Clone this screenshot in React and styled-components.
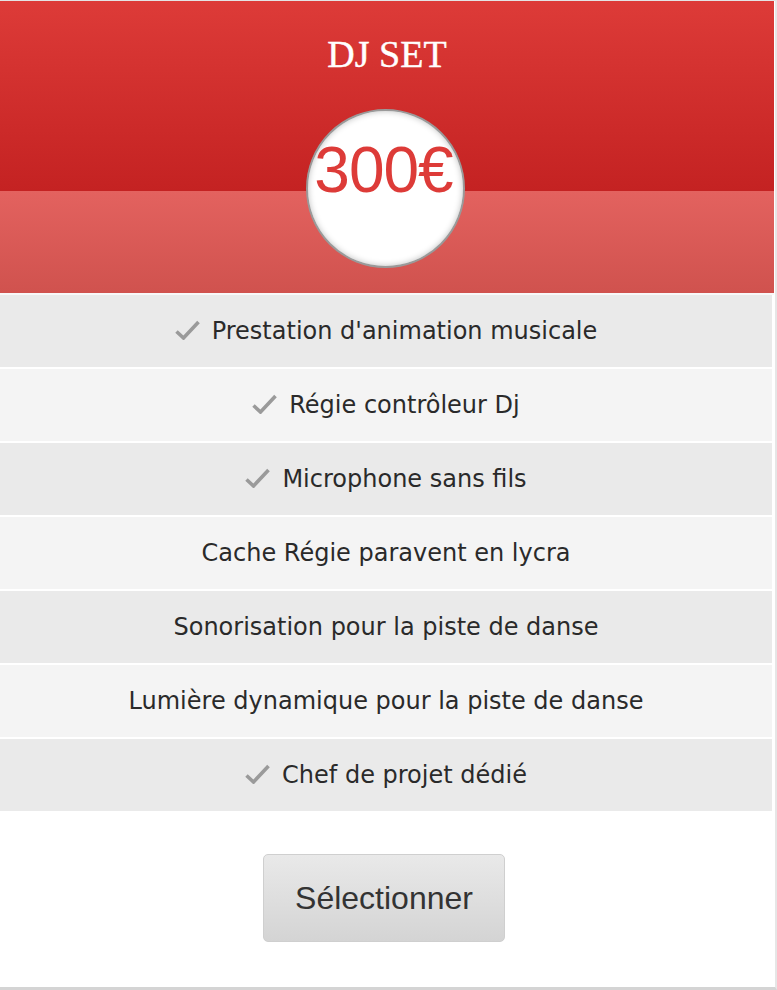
import React from "react";
import styled, { createGlobalStyle } from "styled-components";

const GlobalStyle = createGlobalStyle`
  html, body {
    margin: 0;
    padding: 0;
    background: #ffffff;
  }
`;

const features = [
  { label: "Prestation d'animation musicale", included: true },
  { label: "Régie contrôleur Dj", included: true },
  { label: "Microphone sans fils", included: true },
  { label: "Cache Régie paravent en lycra", included: false },
  { label: "Sonorisation pour la piste de danse", included: false },
  { label: "Lumière dynamique pour la piste de danse", included: false },
  { label: "Chef de projet dédié", included: true },
];

const CheckIcon = () => (
  <svg width="25" height="20" viewBox="0 0 25 20" aria-hidden="true">
    <path d="M1.5 11.5 L8.5 18 L23.5 2" fill="none" stroke="#9a9a9a" strokeWidth="3.6" strokeLinejoin="miter" />
  </svg>
);

export default function App() {
  return (
    <>
      <GlobalStyle />
      <Card>
        <Header>
          <Title>DJ SET</Title>
        </Header>
        <Band />
        <PriceBadge>
          <Price>300€</Price>
        </PriceBadge>
        <Features>
          {features.map((f, i) => (
            <Feature key={f.label} $alt={i % 2 === 1}>
              {f.included && <CheckIcon />}
              <span>{f.label}</span>
            </Feature>
          ))}
        </Features>
        <Footer>
          <SelectButton type="button">Sélectionner</SelectButton>
        </Footer>
      </Card>
    </>
  );
}

const Card = styled.div`
  position: relative;
  width: 775px;
  height: 986px;
  border-top: 1px solid #e4e4e4;
  border-right: 2px solid #e6e6e6;
  border-bottom: 3px solid #d4d4d4;
  background: #fff;
  display: flex;
  flex-direction: column;
`;

const Header = styled.div`
  height: 190px;
  margin-right: 1px;
  background: linear-gradient(to bottom, #dd3b38, #c42222);
  display: flex;
  justify-content: center;
`;

const Title = styled.h1`
  margin: 30px 0 0;
  font-family: "Liberation Serif", "Times New Roman", serif;
  font-weight: normal;
  font-size: 38px;
  line-height: 46px;
  color: #fff;
  -webkit-text-stroke: 0.4px #fff;
`;

const Band = styled.div`
  height: 102px;
  margin-right: 1px;
  background: linear-gradient(to bottom, #e3625f, #d0524e);
  border-bottom: 2px solid #f8f8f8;
`;

const PriceBadge = styled.div`
  position: absolute;
  left: 306px;
  top: 108px;
  width: 155px;
  height: 155px;
  border-radius: 50%;
  background: #fff;
  border: 2px solid #9a9a9a;
  box-shadow: inset 0 0 6px rgba(0, 0, 0, 0.25);
  display: flex;
  justify-content: center;
`;

const Price = styled.div`
  margin-top: 22px;
  margin-left: -4px;
  font-family: "Liberation Sans", Arial, sans-serif;
  font-size: 64px;
  line-height: 74px;
  color: #dd3b38;
  letter-spacing: -1px;
  white-space: nowrap;
`;

const Features = styled.ul`
  list-style: none;
  margin: 0 3px 0 0;
  padding: 0;
`;

const Feature = styled.li`
  height: 72px;
  border-bottom: 2px solid #fff;
  background: ${(p) => (p.$alt ? "#f4f4f4" : "#eaeaea")};
  display: flex;
  align-items: center;
  justify-content: center;
  gap: 12px;
  font-family: "DejaVu Sans", Verdana, sans-serif;
  font-size: 24px;
  color: #2a2a2a;

  svg {
    margin-top: -2px;
  }
`;

const Footer = styled.div`
  flex: 1;
  display: flex;
  justify-content: center;
  padding-top: 41px;
  padding-right: 7px;
`;

const SelectButton = styled.button`
  width: 242px;
  height: 88px;
  border: 1px solid #cfcfcf;
  border-radius: 5px;
  background: linear-gradient(to bottom, #e9e9e9, #d4d4d4);
  font-family: "Liberation Sans", Arial, sans-serif;
  font-size: 32px;
  color: #333;
  cursor: pointer;
`;
